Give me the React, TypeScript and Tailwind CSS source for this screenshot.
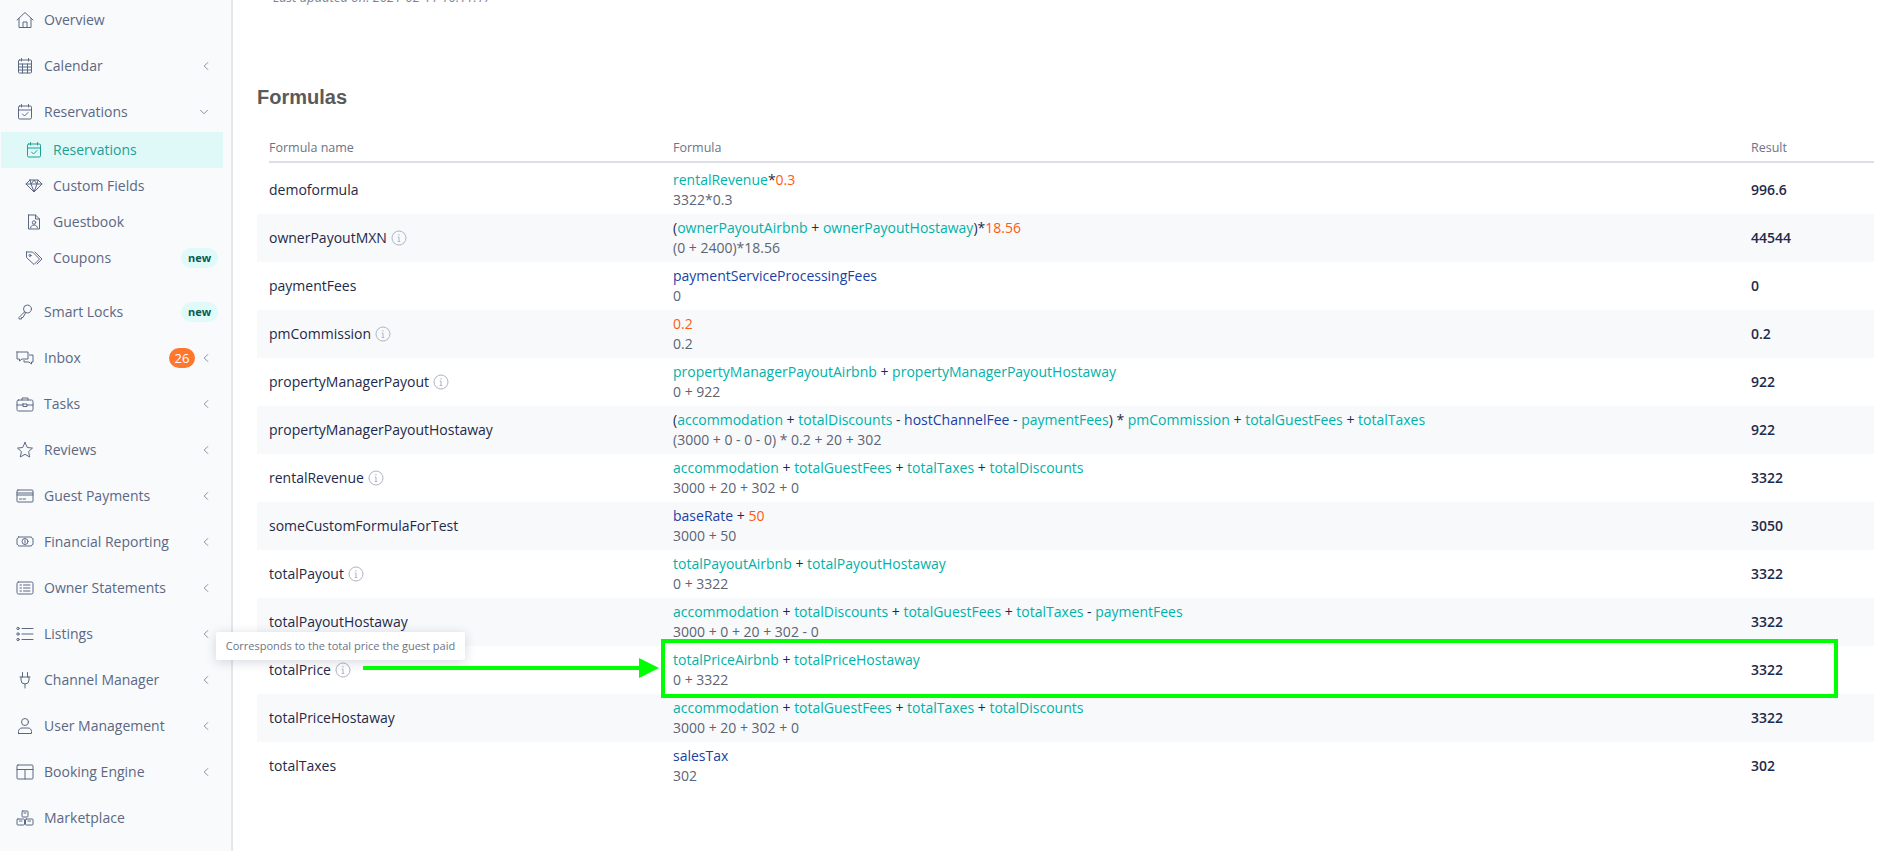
import type { ReactNode } from 'react'
import { ChevronDown, ChevronLeft } from 'lucide-react'

const Ic = ({ children, className = '' }: { children: ReactNode; className?: string }) => (
  <svg viewBox="0 0 18 18" fill="none" stroke="currentColor" strokeWidth="1" strokeLinecap="round" strokeLinejoin="round" className={`w-[18px] h-[18px] shrink-0 ${className}`}>
    {children}
  </svg>
)

const icons: Record<string, ReactNode> = {
  home: <><path d="M1 9 9 1.500l8 7.500" /><path d="M3 7.500V16.500h12V7.500" /><path d="M7 16.500V11h4v5.500" /></>,
  calendar: <><rect x="2.5" y="3" width="13" height="13" rx="1" /><path d="M2.5 7h13M2.5 10h13M2.5 13h13M6.5 7v9M11.5 7v9M5.5 1.5V4M12.5 1.5V4" /></>,
  check: <><rect x="2.5" y="3" width="13" height="13" rx="1.2" /><path d="M2.5 7h13M5.5 1.5V4M12.5 1.5V4M6.5 11l2 2 3.5-3.5" /></>,
  gem: <><path d="M5 3h8l4 4-8 8-8-8 4-4Z" /><path d="M1 7h16M6 7l3 8 3-8M5 3l1 4 3-4 3 4 1-4" /></>,
  guest: <><path d="M3.5 2h7l4 4v10h-11V2Z" /><path d="M10.5 2v4h4" /><circle cx="9" cy="9.5" r="1.7" /><path d="M5.5 15c.3-2 1.7-3 3.5-3s3.2 1 3.5 3" /></>,
  tags: <><path d="M1.5 3h6l7 7-5.5 5.5-7.500-7V3Z" /><circle cx="5" cy="6.500" r="1" /><path d="M10 3l7 7-5 5" /></>,
  key: <><circle cx="11.500" cy="6" r="4" /><path d="M8.500 9 3 14.500V16h2.500v-1.500H7L9.500 10" /></>,
  inbox: <><path d="M1 3h11v7H6l-2.500 2v-2H1V3Z" /><path d="M13.500 6H17v7h-1.500v2L13 13H8v-1.500" /></>,
  tasks: <><rect x="1" y="5" width="16" height="11" rx="1.500" /><path d="M6 5V3h6v2M1 10h6M11 10h6M7 9h4v2.500H7V9Z" /></>,
  star: <path d="m9 1.500 2.300 5 5.200.6-3.900 3.500 1.100 5.400L9 13.300 4.300 16l1.100-5.400L1.500 7.100l5.200-.6L9 1.500Z" />,
  card: <><rect x="1" y="3" width="16" height="12" rx="1" /><path d="M1 6h16M1 8h16M3.500 12h2M7 12h2.500" /></>,
  money: <><path d="M2.500 4h13c0 1 .5 1.500 1.500 1.500v6c-1 0-1.500.5-1.500 1.500h-13c0-1-.5-1.500-1.500-1.500v-6c1 0 1.500-.5 1.500-1.500Z" /><circle cx="9" cy="8.500" r="3" /><path d="M9 7v3" /></>,
  owner: <><rect x="1" y="3" width="16" height="12" rx="1.500" /><path d="M7.500 6H14M7.500 9H14M7.500 12H14M4 6h1.500M4 9h1.500M4 12h1.500" /></>,
  listing: <><circle cx="2" cy="3.500" r="1.200" /><circle cx="2" cy="9" r="1.200" /><circle cx="2" cy="14.500" r="1.200" /><path d="M6 3.500h11M6 9h11M6 14.500h11" /></>,
  plug: <><path d="M6.500 1.500V6M11.500 1.500V6M4 6h10M5 6v3a4 4 0 0 0 8 0V6M9 13v4" /></>,
  user: <><circle cx="9" cy="5" r="3.500" /><path d="M2.500 16.500v-2c0-2 1.500-3.500 3.500-3.500h6c2 0 3.500 1.500 3.500 3.500v2h-13Z" /></>,
  booking: <><rect x="1" y="2" width="16" height="14" rx="1" /><path d="M1 6.500h16M9 6.500V16" /></>,
  market: <><rect x="6" y="2" width="6" height="6" rx=".8" /><rect x="1" y="10" width="7.500" height="6" rx=".8" /><rect x="9.500" y="10" width="7.500" height="6" rx=".8" /><path d="M8 4h2M3.500 12h2.500M12 12h2.500" /></>,
}

const NewBadge = () => (
  <span className="absolute left-[181px] top-1/2 -translate-y-1/2 w-[37px] h-5 rounded-[10px] bg-[#e0fafa] text-[#0b5a52] text-[11px] font-bold leading-5 text-center">new</span>
)

const Chevron = () => <ChevronLeft strokeWidth={1.25} className="absolute left-[199px] top-1/2 -translate-y-1/2 w-[14px] h-[14px]" />

function NavRow({ icon, label, chevron = true, badge }: { icon: string; label: string; chevron?: boolean; badge?: ReactNode }) {
  return (
    <div className="relative h-[46px] flex items-center gap-[10px] pl-4 text-[#5b6883]">
      <Ic>{icons[icon]}</Ic>
      <span>{label}</span>
      {badge}
      {chevron && <Chevron />}
    </div>
  )
}

function SubRow({ icon, label, active, badge }: { icon: string; label: string; active?: boolean; badge?: ReactNode }) {
  return (
    <div className={`relative h-9 flex items-center gap-[10px] pl-[25px] ${active ? 'bg-[#dff9f9] text-[#1f9e93] ml-px w-[222px] !pl-[24px]' : 'text-[#5b6883]'}`}>
      <Ic>{icons[icon]}</Ic>
      <span>{label}</span>
      {badge}
    </div>
  )
}

const T = ({ children }: { children: ReactNode }) => <span className="text-[#00b1a9]">{children}</span>
const B = ({ children }: { children: ReactNode }) => <span className="text-[#1a3fa6]">{children}</span>
const O = ({ children }: { children: ReactNode }) => <span className="text-[#ff5a0f]">{children}</span>

type Row = { name: string; info?: boolean; formula: ReactNode; values: string; result: string }

const rows: Row[] = [
  { name: 'demoformula', formula: <><T>rentalRevenue</T>*<O>0.3</O></>, values: '3322*0.3', result: '996.6' },
  { name: 'ownerPayoutMXN', info: true, formula: <>(<T>ownerPayoutAirbnb</T> + <T>ownerPayoutHostaway</T>)*<O>18.56</O></>, values: '(0 + 2400)*18.56', result: '44544' },
  { name: 'paymentFees', formula: <B>paymentServiceProcessingFees</B>, values: '0', result: '0' },
  { name: 'pmCommission', info: true, formula: <O>0.2</O>, values: '0.2', result: '0.2' },
  { name: 'propertyManagerPayout', info: true, formula: <><T>propertyManagerPayoutAirbnb</T> + <T>propertyManagerPayoutHostaway</T></>, values: '0 + 922', result: '922' },
  { name: 'propertyManagerPayoutHostaway', formula: <>(<T>accommodation</T> + <T>totalDiscounts</T> - <B>hostChannelFee</B> - <T>paymentFees</T>) * <T>pmCommission</T> + <T>totalGuestFees</T> + <T>totalTaxes</T></>, values: '(3000 + 0 - 0 - 0) * 0.2 + 20 + 302', result: '922' },
  { name: 'rentalRevenue', info: true, formula: <><T>accommodation</T> + <T>totalGuestFees</T> + <T>totalTaxes</T> + <T>totalDiscounts</T></>, values: '3000 + 20 + 302 + 0', result: '3322' },
  { name: 'someCustomFormulaForTest', formula: <><B>baseRate</B> + <O>50</O></>, values: '3000 + 50', result: '3050' },
  { name: 'totalPayout', info: true, formula: <><T>totalPayoutAirbnb</T> + <T>totalPayoutHostaway</T></>, values: '0 + 3322', result: '3322' },
  { name: 'totalPayoutHostaway', formula: <><T>accommodation</T> + <T>totalDiscounts</T> + <T>totalGuestFees</T> + <T>totalTaxes</T> - <T>paymentFees</T></>, values: '3000 + 0 + 20 + 302 - 0', result: '3322' },
  { name: 'totalPrice', info: true, formula: <><T>totalPriceAirbnb</T> + <T>totalPriceHostaway</T></>, values: '0 + 3322', result: '3322' },
  { name: 'totalPriceHostaway', formula: <><T>accommodation</T> + <T>totalGuestFees</T> + <T>totalTaxes</T> + <T>totalDiscounts</T></>, values: '3000 + 20 + 302 + 0', result: '3322' },
  { name: 'totalTaxes', formula: <B>salesTax</B>, values: '302', result: '302' },
]

const InfoIcon = () => (
  <svg viewBox="0 0 16 16" fill="none" className="w-4 h-4 -ml-px text-[#aeb4c2]" stroke="currentColor">
    <circle cx="8" cy="8" r="7" strokeWidth="1" />
    <path d="M8 7v4.500M6.800 7H8M6.800 11.500h2.400" strokeWidth="1" />
    <circle cx="8" cy="4.800" r=".7" fill="currentColor" stroke="none" />
  </svg>
)

export default function App() {
  return (
    <div className="relative flex h-[851px] w-[1894px] overflow-hidden bg-white text-sm font-['Open_Sans',sans-serif]">
      <aside className="w-[233px] shrink-0 bg-[#f9fafc] border-r-2 border-[#e4e7ec] -mt-[3px] text-[14px]">
        <NavRow icon="home" label="Overview" chevron={false} />
        <NavRow icon="calendar" label="Calendar" />
        <div className="relative">
          <NavRow icon="check" label="Reservations" chevron={false} />
          <ChevronDown strokeWidth={1.25} className="absolute left-[197px] top-1/2 -translate-y-1/2 w-[14px] h-[14px] text-[#5b6883]" />
        </div>
        <div className="-mt-[3px] mb-[13px]">
          <SubRow icon="check" label="Reservations" active />
          <SubRow icon="gem" label="Custom Fields" />
          <SubRow icon="guest" label="Guestbook" />
          <SubRow icon="tags" label="Coupons" badge={<NewBadge />} />
        </div>
        <NavRow icon="key" label="Smart Locks" chevron={false} badge={<NewBadge />} />
        <NavRow
          icon="inbox"
          label="Inbox"
          badge={<span className="absolute left-[169px] top-1/2 -translate-y-1/2 w-[26px] h-5 rounded-[10px] bg-[#ff762d] text-white text-[13px] leading-5 text-center">26</span>}
        />
        <NavRow icon="tasks" label="Tasks" />
        <NavRow icon="star" label="Reviews" />
        <NavRow icon="card" label="Guest Payments" />
        <NavRow icon="money" label="Financial Reporting" />
        <NavRow icon="owner" label="Owner Statements" />
        <NavRow icon="listing" label="Listings" />
        <NavRow icon="plug" label="Channel Manager" />
        <NavRow icon="user" label="User Management" />
        <NavRow icon="booking" label="Booking Engine" />
        <NavRow icon="market" label="Marketplace" chevron={false} />
      </aside>

      <main className="flex-1 pl-6 pr-5">
        <p className="-mt-[13px] pl-4 h-5 leading-5 italic text-[13px] text-[#7b8494]">Last updated on: 2021-02-11 10:11:17</p>
        <h2 className="mt-[78px] h-6 leading-6 text-[20px] font-bold text-[#5a5a5a] font-['Liberation_Sans',sans-serif]">Formulas</h2>
        <div className="mt-[29px] pl-3 h-[25px]">
          <div className="grid grid-cols-[404px_1078px_1fr] h-full border-b-2 border-[#dcdfe5] text-[12.5px] leading-5 text-[#6b7488]">
            <span>Formula name</span>
            <span>Formula</span>
            <span>Result</span>
          </div>
        </div>
        <div className="mt-[3px]">
          {rows.map((r, i) => (
            <div key={r.name} className={`grid grid-cols-[404px_1078px_1fr] h-12 items-center pl-3 ${i % 2 === 1 ? 'bg-[#f8f9fb]' : ''}`}>
              <div className="flex items-center gap-[5px] text-[#1e2a4a]">
                <span>{r.name}</span>
                {r.info && <InfoIcon />}
              </div>
              <div className="leading-5 text-[#1e2a4a]">
                <div>{r.formula}</div>
                <div className="text-[#5b6475]">{r.values}</div>
              </div>
              <div className="font-semibold text-[#1e2a4a]">{r.result}</div>
            </div>
          ))}
        </div>
      </main>

      {/* annotation + tooltip lying over the table */}
      <div className="absolute left-[216px] top-[632px] w-[249px] h-[28px] rounded-[2px] bg-white shadow-[0_2px_12px_rgba(30,40,70,0.18)] text-[11px] whitespace-nowrap leading-[28px] text-center text-[#6b7488]">
        Corresponds to the total price the guest paid
      </div>
      <div className="absolute left-[661px] top-[639px] w-[1177px] h-[59px] border-4 border-[#00ff00]" />
      <svg className="absolute left-[363px] top-[658px]" width="296" height="20" viewBox="0 0 296 20">
        <path d="M0 8h276V0l20 10-20 10v-8H0Z" fill="#00ff00" />
      </svg>
    </div>
  )
}
